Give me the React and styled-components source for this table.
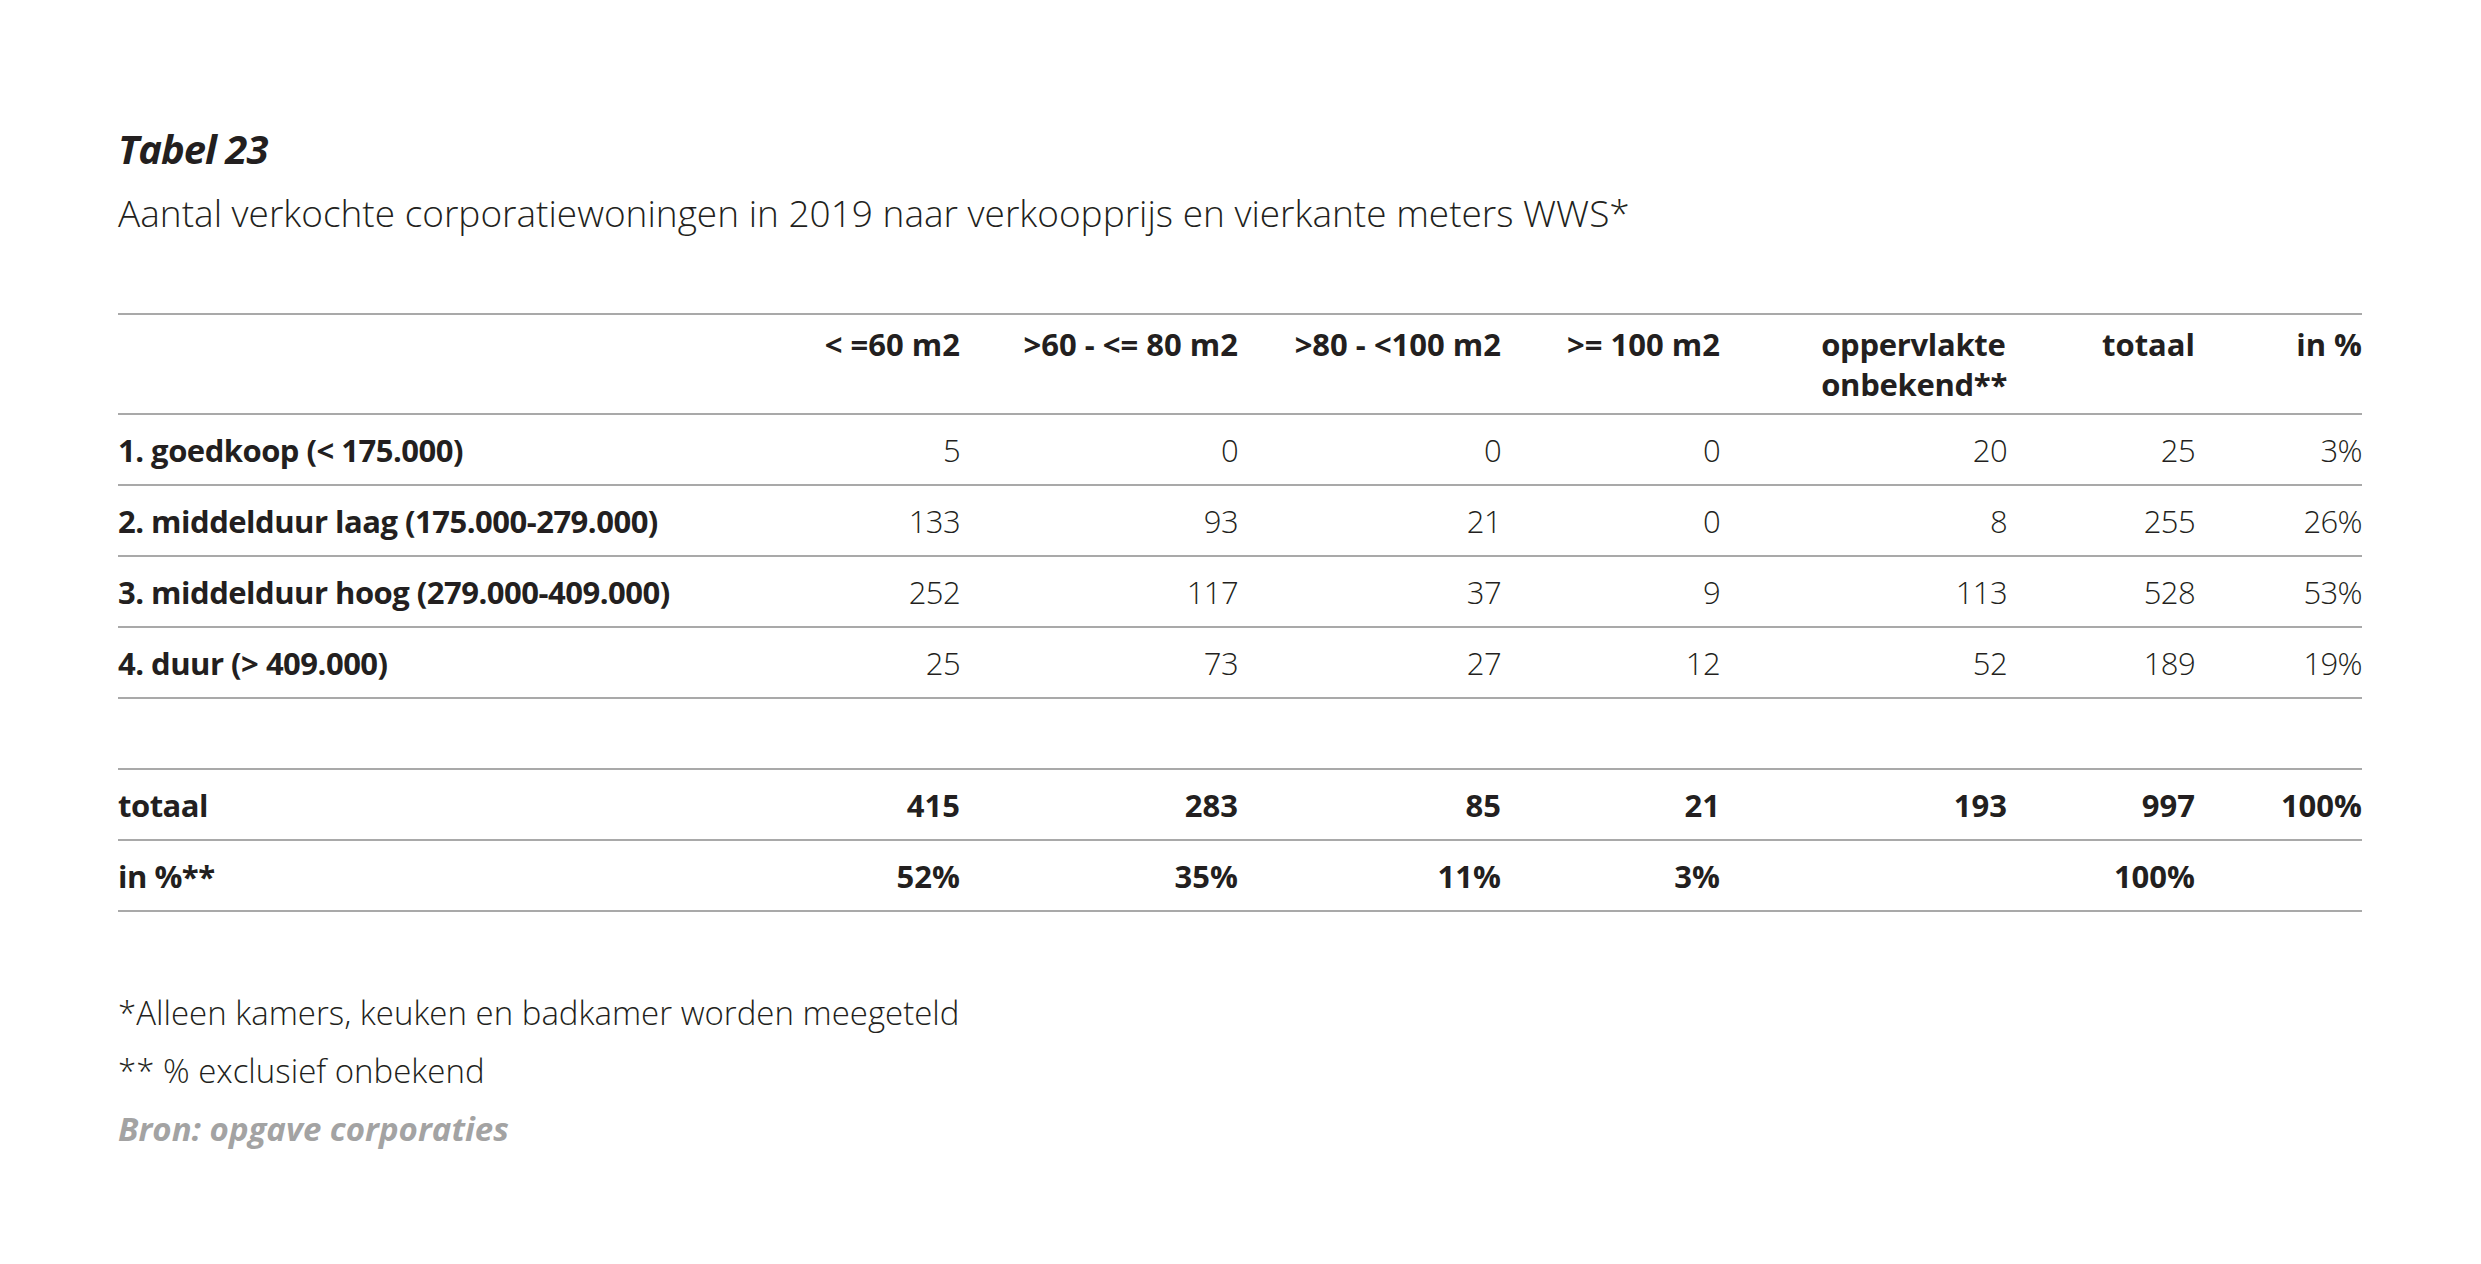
import React from "react";
import styled, { createGlobalStyle } from "styled-components";

const Global = createGlobalStyle`
  html, body { margin: 0; padding: 0; background: #ffffff; }
  body { font-family: "Open Sans", "Noto Sans", sans-serif; color: #231f20; }
`;

const COLS = "582px 260px 278px 263px 219px 287px 188px 167px";

const Page = styled.div`
  width: 2481px;
  min-height: 1264px;
  box-sizing: border-box;
  padding: 125px 0 0 118px;
`;

const Title = styled.h1`
  margin: 0;
  font-size: 40px;
  line-height: 48px;
  font-weight: 700;
  font-style: italic;
  letter-spacing: -1px;
`;

const Subtitle = styled.p`
  margin: 17px 0 0 0;
  font-size: 37px;
  line-height: 46px;
  font-weight: 300;
`;

const Table = styled.div`
  margin-top: 77px;
  width: 2244px;
`;

const Row = styled.div`
  display: grid;
  grid-template-columns: ${COLS};
  box-sizing: border-box;
  height: ${(p) => p.$h || 71}px;
  border-bottom: 2px solid #a9a9a9;
  border-top: ${(p) => (p.$top ? "2px solid #a9a9a9" : "none")};
  align-items: ${(p) => (p.$head ? "start" : "center")};
  padding-top: ${(p) => (p.$head ? "9px" : "0")};
  font-size: 31px;
  line-height: 40px;
`;

const Label = styled.div`
  font-weight: 700;
  white-space: nowrap;
  letter-spacing: -0.5px;
`;

const Cell = styled.div`
  text-align: right;
  white-space: nowrap;
  font-weight: ${(p) => (p.$bold ? 700 : 300)};
  letter-spacing: ${(p) => (p.$bold ? "0" : "-0.6px")};
`;

const HeadCell = styled.div`
  text-align: right;
  font-weight: 700;
  white-space: nowrap;
`;

const HeadBlock = styled.span`
  display: inline-block;
  text-align: left;
  letter-spacing: -0.3px;
`;

const Notes = styled.div`
  margin-top: 72px;
  font-size: 33px;
  line-height: 58px;
  font-weight: 300;
`;

const Note = styled.div``;

const Source = styled.div`
  font-weight: 700;
  font-style: italic;
  color: #a3a3a3;
`;

const headers = [
  "< =60 m2",
  ">60 - <= 80 m2",
  ">80 - <100 m2",
  ">= 100 m2",
  null,
  "totaal",
  "in %",
];

const rows = [
  ["1. goedkoop (< 175.000)", "5", "0", "0", "0", "20", "25", "3%"],
  ["2. middelduur laag (175.000-279.000)", "133", "93", "21", "0", "8", "255", "26%"],
  ["3. middelduur hoog (279.000-409.000)", "252", "117", "37", "9", "113", "528", "53%"],
  ["4. duur (> 409.000)", "25", "73", "27", "12", "52", "189", "19%"],
];

const totals = [
  ["totaal", "415", "283", "85", "21", "193", "997", "100%"],
  ["in %**", "52%", "35%", "11%", "3%", "", "100%", ""],
];

export default function App() {
  return (
    <Page>
      <Global />
      <Title>Tabel 23</Title>
      <Subtitle>
        Aantal verkochte corporatiewoningen in 2019 naar verkoopprijs en vierkante meters WWS*
      </Subtitle>
      <Table>
        <Row $head $top $h={102}>
          <Label />
          {headers.map((h, i) =>
            h === null ? (
              <HeadCell key={i}>
                <HeadBlock>
                  oppervlakte
                  <br />
                  onbekend**
                </HeadBlock>
              </HeadCell>
            ) : (
              <HeadCell key={i}>{h}</HeadCell>
            )
          )}
        </Row>
        {rows.map((r) => (
          <Row key={r[0]}>
            <Label>{r[0]}</Label>
            {r.slice(1).map((v, i) => (
              <Cell key={i}>{v}</Cell>
            ))}
          </Row>
        ))}
        <Row />
        {totals.map((r) => (
          <Row key={r[0]}>
            <Label>{r[0]}</Label>
            {r.slice(1).map((v, i) => (
              <Cell key={i} $bold>
                {v}
              </Cell>
            ))}
          </Row>
        ))}
      </Table>
      <Notes>
        <Note>*Alleen kamers, keuken en badkamer worden meegeteld</Note>
        <Note>** % exclusief onbekend</Note>
        <Source>Bron: opgave corporaties</Source>
      </Notes>
    </Page>
  );
}
